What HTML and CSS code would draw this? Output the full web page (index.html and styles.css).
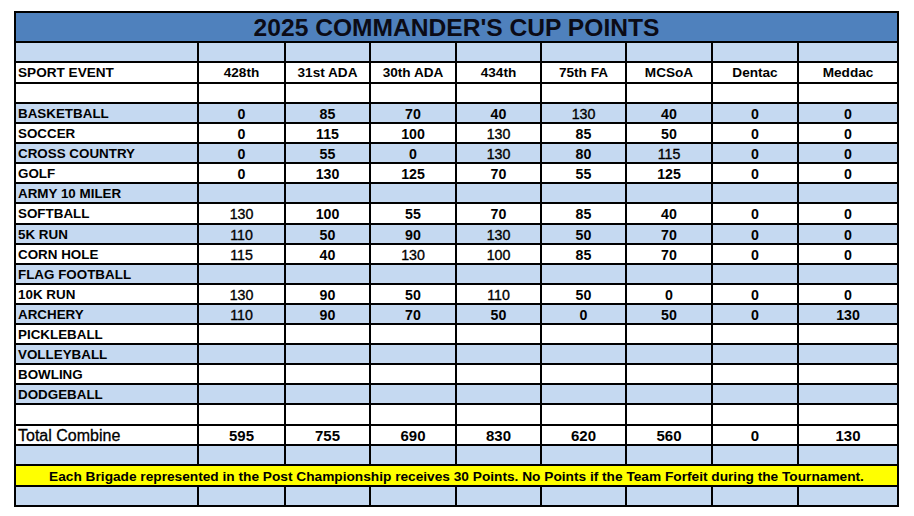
FILE: index.html
```html
<!DOCTYPE html>
<html lang="en">
<head>
<meta charset="utf-8">
<title>2025 Commander's Cup Points</title>
<link rel="stylesheet" href="styles.css">
</head>
<body>
<div class="sheet">
  <div class="title">2025 COMMANDER'S CUP POINTS</div>

  <div class="row blue"><div></div><div></div><div></div><div></div><div></div><div></div><div></div><div></div><div></div></div>
  <div class="row white tall head"><div class="label">SPORT EVENT</div><div>428th</div><div>31st ADA</div><div>30th ADA</div><div>434th</div><div>75th FA</div><div>MCSoA</div><div>Dentac</div><div>Meddac</div></div>
  <div class="row white"><div></div><div></div><div></div><div></div><div></div><div></div><div></div><div></div><div></div></div>

  <div class="row blue"><div class="label">BASKETBALL</div><div>0</div><div>85</div><div>70</div><div>40</div><div class="n">130</div><div>40</div><div>0</div><div>0</div></div>
  <div class="row white"><div class="label">SOCCER</div><div>0</div><div>115</div><div>100</div><div class="n">130</div><div>85</div><div>50</div><div>0</div><div>0</div></div>
  <div class="row blue"><div class="label">CROSS COUNTRY</div><div>0</div><div>55</div><div>0</div><div class="n">130</div><div>80</div><div class="n">115</div><div>0</div><div>0</div></div>
  <div class="row white"><div class="label">GOLF</div><div>0</div><div>130</div><div>125</div><div>70</div><div>55</div><div>125</div><div>0</div><div>0</div></div>
  <div class="row blue"><div class="label">ARMY 10 MILER</div><div></div><div></div><div></div><div></div><div></div><div></div><div></div><div></div></div>
  <div class="row white tall"><div class="label">SOFTBALL</div><div class="n">130</div><div>100</div><div>55</div><div>70</div><div>85</div><div>40</div><div>0</div><div>0</div></div>
  <div class="row blue"><div class="label">5K RUN</div><div class="n">110</div><div>50</div><div>90</div><div class="n">130</div><div>50</div><div>70</div><div>0</div><div>0</div></div>
  <div class="row white"><div class="label">CORN HOLE</div><div class="n">115</div><div>40</div><div class="n">130</div><div class="n">100</div><div>85</div><div>70</div><div>0</div><div>0</div></div>
  <div class="row blue"><div class="label">FLAG FOOTBALL</div><div></div><div></div><div></div><div></div><div></div><div></div><div></div><div></div></div>
  <div class="row white"><div class="label">10K RUN</div><div class="n">130</div><div>90</div><div>50</div><div class="n">110</div><div>50</div><div>0</div><div>0</div><div>0</div></div>
  <div class="row blue"><div class="label">ARCHERY</div><div class="n">110</div><div>90</div><div>70</div><div>50</div><div>0</div><div>50</div><div>0</div><div>130</div></div>
  <div class="row white"><div class="label">PICKLEBALL</div><div></div><div></div><div></div><div></div><div></div><div></div><div></div><div></div></div>
  <div class="row blue"><div class="label">VOLLEYBALL</div><div></div><div></div><div></div><div></div><div></div><div></div><div></div><div></div></div>
  <div class="row white"><div class="label">BOWLING</div><div></div><div></div><div></div><div></div><div></div><div></div><div></div><div></div></div>
  <div class="row blue"><div class="label">DODGEBALL</div><div></div><div></div><div></div><div></div><div></div><div></div><div></div><div></div></div>
  <div class="row white tall"><div></div><div></div><div></div><div></div><div></div><div></div><div></div><div></div><div></div></div>

  <div class="row white total"><div class="label">Total Combine</div><div>595</div><div>755</div><div>690</div><div>830</div><div>620</div><div>560</div><div>0</div><div>130</div></div>
  <div class="row blue"><div></div><div></div><div></div><div></div><div></div><div></div><div></div><div></div><div></div></div>
  <div class="note tall">Each Brigade represented in the Post Championship receives 30 Points. No Points if the Team Forfeit during the Tournament.</div>
  <div class="row blue"><div></div><div></div><div></div><div></div><div></div><div></div><div></div><div></div><div></div></div>
</div>
</body>
</html>
```

FILE: styles.css
```css
html, body {
  margin: 0;
  padding: 0;
  background: #ffffff;
}

body {
  font-family: "Liberation Sans", Arial, sans-serif;
  color: #000;
}

.sheet {
  margin: 11px 0 0 14px;
  width: 885px;
  box-sizing: border-box;
  background: #000;
  padding: 2px;
  display: flex;
  flex-direction: column;
  gap: 2px;
}

.title {
  height: 28px;
  background: #4f81bd;
  color: #0b0b16;
  font-weight: bold;
  font-size: 24.6px;
  display: flex;
  align-items: center;
  justify-content: center;
  padding-top: 1px;
  box-sizing: border-box;
}

.row {
  display: grid;
  grid-template-columns: 181px 85px 83px 84px 83px 83px 84px 84px 98px;
  column-gap: 2px;
  height: 18px;
}

.row.tall,
.note.tall {
  height: 19px;
}

.row > div {
  display: flex;
  align-items: center;
  justify-content: center;
  font-size: 14.2px;
  line-height: 16px;
  font-weight: bold;
  white-space: nowrap;
  padding-top: 1px;
  box-sizing: border-box;
}

.row > div.label {
  justify-content: flex-start;
  padding-left: 2px;
  font-size: 13.4px;
}

.row > div.n {
  font-weight: normal;
  -webkit-text-stroke: 0.35px #000;
}

.row.blue > div {
  background: #c5d9f1;
}

.row.white > div {
  background: #ffffff;
}

.row.head > div {
  font-size: 13.6px;
}

.row.total > div {
  font-size: 15px;
}

.row.total > div.label {
  font-weight: normal;
  font-size: 16px;
  -webkit-text-stroke: 0.3px #000;
}

.note {
  background: #ffff00;
  font-weight: bold;
  font-size: 13.7px;
  display: flex;
  align-items: center;
  justify-content: center;
  white-space: nowrap;
  padding-top: 1px;
  box-sizing: border-box;
}
```
